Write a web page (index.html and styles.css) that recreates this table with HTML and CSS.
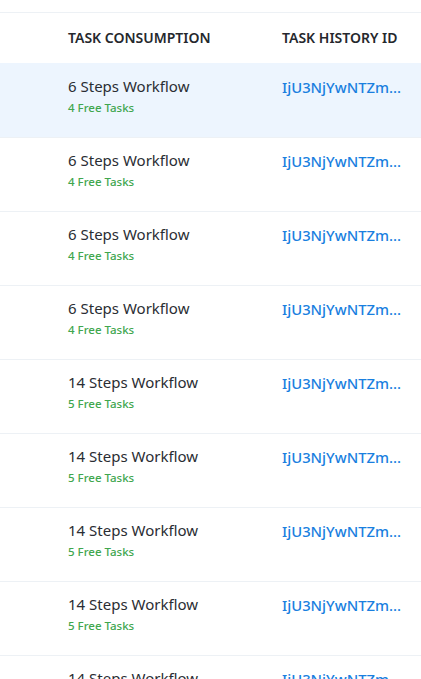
FILE: index.html
```html
<!DOCTYPE html>
<html>
<head>
<meta charset="utf-8">
<link rel="stylesheet" href="styles.css">
</head>
<body>
<div class="table">
  <div class="head">
    <div class="c1">TASK CONSUMPTION</div>
    <div class="c2">TASK HISTORY ID</div>
  </div>
  <div class="row active">
    <div class="c1"><div class="title">6 Steps Workflow</div><div class="sub">4 Free Tasks</div></div>
    <div class="c2"><a class="id">IjU3NjYwNTZm...</a></div>
  </div>
  <div class="row">
    <div class="c1"><div class="title">6 Steps Workflow</div><div class="sub">4 Free Tasks</div></div>
    <div class="c2"><a class="id">IjU3NjYwNTZm...</a></div>
  </div>
  <div class="row">
    <div class="c1"><div class="title">6 Steps Workflow</div><div class="sub">4 Free Tasks</div></div>
    <div class="c2"><a class="id">IjU3NjYwNTZm...</a></div>
  </div>
  <div class="row">
    <div class="c1"><div class="title">6 Steps Workflow</div><div class="sub">4 Free Tasks</div></div>
    <div class="c2"><a class="id">IjU3NjYwNTZm...</a></div>
  </div>
  <div class="row">
    <div class="c1"><div class="title">14 Steps Workflow</div><div class="sub">5 Free Tasks</div></div>
    <div class="c2"><a class="id">IjU3NjYwNTZm...</a></div>
  </div>
  <div class="row">
    <div class="c1"><div class="title">14 Steps Workflow</div><div class="sub">5 Free Tasks</div></div>
    <div class="c2"><a class="id">IjU3NjYwNTZm...</a></div>
  </div>
  <div class="row">
    <div class="c1"><div class="title">14 Steps Workflow</div><div class="sub">5 Free Tasks</div></div>
    <div class="c2"><a class="id">IjU3NjYwNTZm...</a></div>
  </div>
  <div class="row">
    <div class="c1"><div class="title">14 Steps Workflow</div><div class="sub">5 Free Tasks</div></div>
    <div class="c2"><a class="id">IjU3NjYwNTZm...</a></div>
  </div>
  <div class="row">
    <div class="c1"><div class="title">14 Steps Workflow</div><div class="sub">5 Free Tasks</div></div>
    <div class="c2"><a class="id">IjU3NjYwNTZm...</a></div>
  </div>
</div>
</body>
</html>
```
FILE: styles.css
```css
html, body {
  margin: 0;
  padding: 0;
  background: #ffffff;
  overflow: hidden;
}
body {
  font-family: "Noto Sans", Lato, sans-serif;
  color: #2a2d33;
}
.table {
  margin-top: 12px;
  border-top: 1px solid #edf1f5;
}
.head {
  display: flex;
  height: 50px;
  align-items: center;
  font-size: 14px;
  font-weight: 600;
  color: #25282d;
  padding-bottom: 2px;
  box-sizing: border-box;
}
.c1 {
  width: 282px;
  padding-left: 68px;
  box-sizing: border-box;
  flex: none;
}
.c2 {
  flex: 1;
  white-space: nowrap;
}
.row {
  display: flex;
  height: 74px;
  box-sizing: border-box;
  border-top: 1px solid #edf1f5;
  padding-top: 12px;
}
.row.active {
  background: #edf5fe;
  border-top-color: #edf5fe;
}
.title {
  font-size: 15px;
  line-height: 20px;
  color: #2a2d33;
}
.sub {
  font-size: 11.5px;
  line-height: 15px;
  margin-top: 4px;
  color: #40a64e;
  font-weight: 500;
}
.id {
  font-size: 14.8px;
  line-height: 20px;
  color: #1a7fdf;
  font-weight: 500;
}
```
